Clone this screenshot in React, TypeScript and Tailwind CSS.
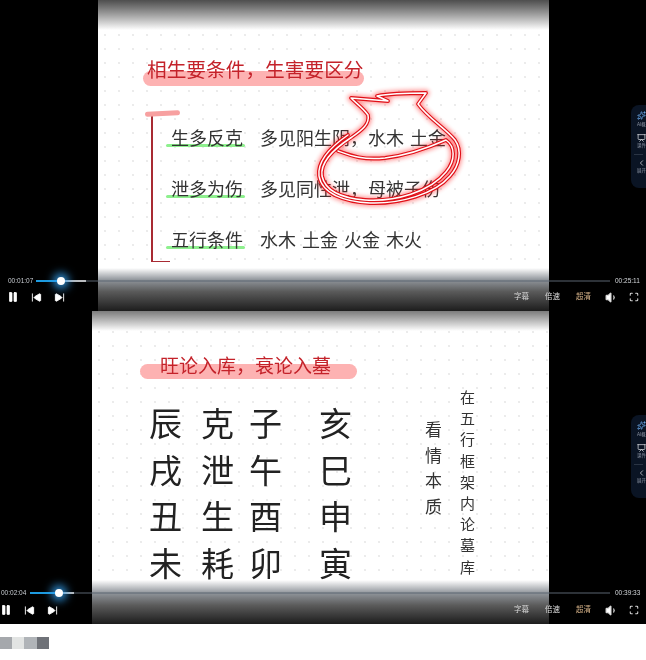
import React from 'react';
import { Pause, SkipBack, SkipForward, Volume1, Maximize, ChevronLeft, Sparkles, Presentation } from 'lucide-react';

const SidePanel = ({ className }: { className: string }) => (
  <div className={`absolute right-0 w-[15px] h-[83px] bg-[#0a1424] rounded-l-lg overflow-hidden flex flex-col items-start pl-[6px] pt-[6px] text-[4.5px] leading-[6px] text-[#8b93a3] whitespace-nowrap ${className}`}>
    <Sparkles className="w-[9px] h-[9px] shrink-0 text-[#6aa8e8]" />
    <span className="mt-[2px]">AI概</span>
    <Presentation className="w-[9px] h-[10px] shrink-0 mt-[5px] text-[#d5d8de]" />
    <span>课件</span>
    <div className="w-full h-px bg-[#2a3444] mt-[5px] -ml-[3px]" />
    <ChevronLeft className="w-[9px] h-[10px] shrink-0 mt-[3px] text-[#d5d8de]" />
    <span>展开</span>
  </div>
);

const Controls = ({ time, total, padClass, timeWidth, fillClass, trackClass, iconsClass, boxClass, rowClass }: {
  time: string; total: string; padClass: string; timeWidth: string; fillClass: string; trackClass: string; iconsClass: string; boxClass: string; rowClass: string;
}) => (
  <div className={`absolute inset-x-0 bottom-0 text-white ${boxClass}`}>
    <div className={`flex items-center h-[12px] ${padClass}`}>
      <span className={`text-[6.5px] text-[#c8ccd2] ${timeWidth}`}>{time}</span>
      <div className="relative flex-1 h-[2px] bg-[#59636f]/50">
        <div className={`absolute left-0 top-0 h-full bg-[#b9bcc0] ${trackClass}`} />
        <div className={`absolute left-0 top-0 h-full bg-[#1d9be0] ${fillClass}`}>
          <div className="absolute -right-[4px] -top-[3px] w-[8px] h-[8px] rounded-full bg-white shadow-[0_0_9px_4px_rgba(50,160,240,0.85)]" />
        </div>
      </div>
      <span className="text-[6.5px] text-[#d5d8dc] w-[36px] pl-[5px] ml-auto">{total}</span>
    </div>
    <div className={`flex items-center h-[18px] pr-[7px] ${rowClass}`}>
      <div className={`flex items-center ${iconsClass}`}>
        <Pause className="w-[12px] h-[12px] fill-white -ml-[1px]" strokeWidth={1.5} />
        <SkipBack className="w-[11px] h-[11px] fill-white" />
        <SkipForward className="w-[11px] h-[11px] fill-white" />
      </div>
      <div className="ml-auto flex items-center text-[7.5px] text-[#d8d8d8]">
        <span>字幕</span>
        <span className="ml-[16px]">倍速</span>
        <span className="ml-[16px] text-[#d8b48a]">超清</span>
        <Volume1 className="w-[13px] h-[13px] ml-[14px] fill-white" />
        <Maximize className="w-[10px] h-[10px] ml-[11px]" strokeWidth={2.5} />
      </div>
    </div>
  </div>
);

const VASE_PATH = 'M338 151 C352 156 362 160 385 158 C410 155 430 147 446 140 C455 146 456 160 446 172 C430 192 395 202 365 200 C340 198 325 190 322 176 C320 162 335 148 352 137 C362 130 370 124 368 115 C363 108 357 104 351 98 L388 101 L377 96 C392 93 410 93 426 93 L418 104 C428 118 445 128 455 140 C462 150 460 165 450 176 C435 194 400 204 370 203 C345 202 322 194 319 176 C317 160 332 146 348 135';

const Vase = () => (
  <svg className="absolute left-[212px] top-[85px] w-[160px] h-[125px]" viewBox="310 85 160 125" fill="none" strokeLinejoin="round" strokeLinecap="round">
    <path d={VASE_PATH} stroke="#ff2020" strokeWidth={7} opacity={0.45} className="blur-[2px]" />
    <path d={VASE_PATH} stroke="#e01018" strokeWidth={3.8} />
    <path d={VASE_PATH} stroke="#ffffff" strokeWidth={1.5} />
  </svg>
);

const Row = ({ label, text }: { label: string; text: string }) => (
  <div className="flex items-center h-[26px] text-[18px] leading-[26px] text-[#333] whitespace-pre [word-spacing:1px]">
    <div className="relative w-[90px]">
      <div className="absolute -left-[4px] bottom-[5px] w-[79px] h-[3px] rounded-full bg-[#8ef08e]" />
      <span className="relative pl-[1px]">{label}</span>
    </div>
    <span>{text}</span>
  </div>
);

const Grid = ['辰', '克', '子', '亥', '戌', '泄', '午', '巳', '丑', '生', '酉', '申', '未', '耗', '卯', '寅'];

export default function App() {
  return (
    <div className="w-[646px] h-[660px] bg-white overflow-hidden font-['Liberation_Sans','Noto_Sans_CJK_SC',sans-serif]">
      {/* first video */}
      <div className="relative h-[311px] bg-black blur-[0.4px]">
        <div className="relative ml-[98px] w-[451px] h-full bg-white bg-[radial-gradient(#ebebeb_0.7px,transparent_1px)] bg-[length:14px_14px] overflow-hidden pt-[59px] pl-[49px]">
          <div className="absolute inset-x-0 top-0 h-[30px] bg-gradient-to-b from-[#4e4e4e] to-white" />
          <div className="absolute inset-x-0 bottom-0 h-[43px] bg-[linear-gradient(to_bottom,#ffffff_0%,#8f949a_28%,#5a5a5a_55%,#1d1d1d_100%)]" />

          <div className="relative w-fit text-[19.7px] leading-[22px] text-[#c4222a] whitespace-nowrap">
            <div className="absolute -left-[4px] top-[12px] w-[221px] h-[15px] rounded-full bg-[#fdb2b2]" />
            <span className="relative">{'相生要条件\uFF0C生害要区分'}</span>
          </div>

          <div className="relative flex mt-[33px] ml-[4px] text-[18px]">
            <div className="absolute left-[-6px] -top-[3px] w-[35px] h-[5px] rounded-full bg-[#f7a0a0] -rotate-3" />
            <div className="w-[19px] h-[148px] border-l-2 border-y border-[#a82a33]" />
            <div className="flex flex-col gap-[25px] pt-[12px]">
              <Row label="生多反克" text={'多见阳生阴\uFF0C水木 土金'} />
              <Row label="泄多为伤" text={'多见同性泄\uFF0C母被子伤'} />
              <Row label="五行条件" text="水木 土金 火金 木火" />
            </div>
          </div>
          <Vase />
        </div>
        <Controls time="00:01:07" total="00:25:11" padClass="pl-[8px]" timeWidth="w-[28px]" fillClass="w-[25px]" trackClass="w-[50px]" iconsClass="pl-[8px] gap-[12px]" boxClass="h-[36px]" rowClass="mt-[1px]" />
        <SidePanel className="top-[105px]" />
      </div>

      {/* second video */}
      <div className="relative h-[313px] bg-black blur-[0.4px]">
        <div className="relative ml-[92px] w-[457px] h-full bg-white bg-[radial-gradient(#ebebeb_0.7px,transparent_1px)] bg-[length:14px_14px] overflow-hidden pt-[45px] pl-[48px]">
          <div className="absolute inset-x-0 top-0 h-[20px] bg-gradient-to-b from-[#7c7c7c] to-white" />
          <div className="absolute inset-x-0 bottom-0 h-[44px] bg-[linear-gradient(to_bottom,#ffffff_0%,#8f949a_30%,#5a5a5a_58%,#1d1d1d_100%)]" />

          <div className="relative w-[217px] text-[19px] leading-[22px] text-[#c4222a] whitespace-nowrap pl-[20px]">
            <div className="absolute left-0 top-[8px] w-[217px] h-[15px] rounded-full bg-[#fdb2b2]" />
            <span className="relative">{'旺论入库\uFF0C衰论入墓'}</span>
          </div>

          <div className="flex mt-[24px] text-[#222]">
            <div className="grid grid-cols-[52px_48px_70px_34px] auto-rows-[46.7px] ml-[9px] text-[33px] leading-[46px]">
              {Grid.map((c) => (
                <span key={c}>{c}</span>
              ))}
            </div>
            <div className="flex flex-col ml-[72px] mt-[16px] text-[17px] leading-[25.7px] text-[#333] w-[18px]">
              {'看情本质'.split('').map((c) => <span key={c}>{c}</span>)}
            </div>
            <div className="flex flex-col ml-[17px] -mt-[15px] text-[15px] leading-[21.2px] text-[#333] w-[16px]">
              {'在五行框架内论墓库'.split('').map((c) => <span key={c}>{c}</span>)}
            </div>
          </div>
        </div>
        <Controls time="00:02:04" total="00:39:33" padClass="pl-[1px]" timeWidth="w-[29px]" fillClass="w-[29px]" trackClass="w-[44px]" iconsClass="pl-[1px] gap-[12px]" boxClass="h-[37px]" rowClass="mt-[2px]" />
        <SidePanel className="top-[104px]" />
      </div>

      {/* thumbnails */}
      <div className="flex mt-[13px] h-[12px]">
        <div className="w-[12px] bg-[#a5a8ac]" />
        <div className="w-[12px] bg-[#e2e4e3]" />
        <div className="w-[13px] bg-[#b0b4b8]" />
        <div className="w-[12px] bg-[#6f7278]" />
      </div>
    </div>
  );
}
